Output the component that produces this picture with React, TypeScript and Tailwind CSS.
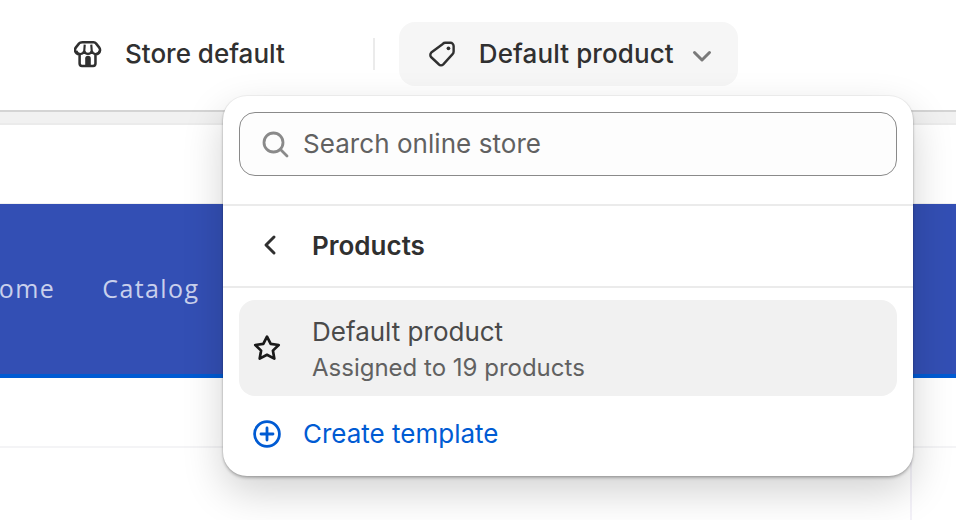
import React from "react";

const inter = "font-['Inter',sans-serif]";

function StoreIcon() {
  return (
    <svg width="28" height="28" viewBox="0 0 30 30" fill="none" className="text-[#303030]">
      <path d="M9 2.300h12c1 0 1.900.5 2.500 1.300l3.400 4.300c1.600 2 1.300 4.800-.6 6.300-1 .8-2.100 1.100-3.300 1v10c0 1.500-1 2.600-2.500 2.600H8.500C7 27.800 6 26.700 6 25.200v-10c-1.200.1-2.300-.2-3.300-1-1.900-1.500-2.200-4.300-.6-6.300l3.400-4.300C6.100 2.800 7 2.300 9 2.300Z" stroke="currentColor" strokeWidth="2.700" strokeLinejoin="round" />
      <path d="M2.500 11.500c1.200 4.500 7.300 4.800 8.500 0 .9 4.500 7.100 4.500 8 0 1.200 4.800 7.300 4.500 8.500 0M11.500 5 11 11.500M18.500 5l.5 6.500" stroke="currentColor" strokeWidth="2.300" strokeLinejoin="round" />
      <path d="M12 27v-7a3 3 0 0 1 6 0v7Z" fill="currentColor" />
    </svg>
  );
}

function TagIcon() {
  return (
    <svg width="30" height="30" viewBox="0 0 30 30" fill="none" className="text-[#303030]">
      <g transform="translate(1 0.500) scale(0.96 1)">
        <path d="M18 3.300h5.400c1.800 0 3.300 1.500 3.300 3.300V12c0 1-.4 1.900-1.100 2.600l-9.700 10.200c-1.300 1.300-3.400 1.300-4.700 0L3.400 17.800c-1.300-1.300-1.300-3.400 0-4.700L15.400 4.400c.7-.7 1.600-1.100 2.600-1.100Z" stroke="currentColor" strokeWidth="2.500" strokeLinejoin="round" />
        <circle cx="21.300" cy="8.800" r="1.900" fill="currentColor" />
      </g>
    </svg>
  );
}

function StarIcon() {
  return (
    <svg width="28" height="28" viewBox="0 0 28 28" fill="none" className="text-[#1a1a1a]">
      <path d="M14 2.600l3.700 7.200 8 1.200-5.800 5.600 1.400 8-7.300-3.800-7.300 3.800 1.400-8L2.300 11l8-1.200L14 2.600Z" stroke="currentColor" strokeWidth="2.700" strokeLinejoin="round" />
    </svg>
  );
}

function PlusIcon() {
  return (
    <svg width="30" height="30" viewBox="0 0 30 30" fill="none" className="text-[#005bd3]">
      <circle cx="15" cy="15" r="12.400" stroke="currentColor" strokeWidth="2.800" />
      <path d="M15 9v12M9 15h12" stroke="currentColor" strokeWidth="2.800" strokeLinecap="round" />
    </svg>
  );
}

export default function App() {
  return (
    <div className={`relative w-[956px] h-[520px] overflow-hidden bg-white ${inter}`}>
      <header className="flex h-[110px] items-center pl-[74px] pb-[2px] bg-white">
        <StoreIcon />
        <span className="ml-[23px] text-[26px] font-medium leading-none text-[#303030]">Store default</span>
        <div className="ml-[88px] h-[32px] w-[2px] bg-[#ebebeb]" />
        <div className="ml-[24px] flex h-[64px] w-[339px] items-center rounded-[16px] bg-[#f6f6f6] pl-[28px]">
          <TagIcon />
          <span className="ml-[22px] text-[26px] font-medium leading-none tracking-[0.1px] text-[#303030]">Default product</span>
          <svg width="22" height="22" viewBox="0 0 22 22" fill="none" className="ml-[17px] mt-[4px] text-[#7a7a7a]">
            <path d="M3.500 7.500 11 15l7.500-7.500" stroke="currentColor" strokeWidth="3" strokeLinecap="round" strokeLinejoin="round" />
          </svg>
        </div>
      </header>

      <div className="h-[15px] border-y-2 border-t-[#d4d4d4] border-b-[#ebebeb] bg-[#f1f1f1]" />

      <div className="h-[79px] border-b border-b-[#f1f1f1]" />

      <nav className="flex h-[174px] items-start gap-[47px] border-b-4 border-b-[#005bd3] bg-[#334fb4] pt-[66px] font-['Open_Sans',sans-serif] text-[25px] leading-[36px] tracking-[1.4px] text-[#c9d0ec] overflow-hidden">
        <span className="-ml-[21px]">Home</span>
        <span>Catalog</span>
      </nav>

      <div className="mt-[68px] h-[2px] bg-[#f4f4f6]" />
      <div className="absolute right-[44px] top-[448px] h-[72px] w-[2px] bg-[#f3f1f8]" />

      <div className="absolute left-[223px] top-[96px] w-[690px] h-[380px] rounded-[24px] bg-white shadow-[0_0_0_1px_rgba(0,0,0,0.04),0_2px_3px_rgba(0,0,0,0.25),0_16px_40px_rgba(0,0,0,0.18)]">
        <div className="flex h-[110px] items-start px-[16px] pt-[16px] border-b-2 border-b-[#ebebeb]">
          <div className="flex h-[64px] w-full items-center rounded-[16px] border border-[#8a8a8a] bg-[#fdfdfd] pl-[20px]">
            <svg width="30" height="30" viewBox="0 0 30 30" fill="none" className="text-[#8a8a8a]">
              <circle cx="13.500" cy="13.500" r="9.500" stroke="currentColor" strokeWidth="2.800" />
              <path d="M20.500 20.500 27 27" stroke="currentColor" strokeWidth="2.800" strokeLinecap="round" />
            </svg>
            <span className="ml-[13px] text-[26px] leading-none tracking-[0.05px] text-[#616161]">Search online store</span>
          </div>
        </div>

        <div className="flex h-[82px] items-center border-b-2 border-b-[#ebebeb] pl-[32px] pb-[2px]">
          <svg width="28" height="28" viewBox="0 0 28 28" fill="none" className="text-[#303030]">
            <path d="M19 6 11 14l8 8" stroke="currentColor" strokeWidth="3" strokeLinecap="round" strokeLinejoin="round" />
          </svg>
          <span className="ml-[29px] mt-[2px] text-[26px] font-semibold leading-none text-[#303030]">Products</span>
        </div>

        <div className="mx-[16px] mt-[12px] flex h-[96px] items-center rounded-[16px] bg-[#f1f1f1] pl-[14px]">
          <StarIcon />
          <div className="ml-[31px] mt-[4px] flex flex-col">
            <span className="text-[26px] leading-[32px] text-[#4a4a4a]">Default product</span>
            <span className="mt-[4px] text-[24px] leading-[32px] text-[#616161]">Assigned to 19 products</span>
          </div>
        </div>

        <div className="mt-[23px] flex items-center pl-[29px]">
          <PlusIcon />
          <span className="ml-[21px] text-[26px] leading-none text-[#005bd3]">Create template</span>
        </div>
      </div>
    </div>
  );
}
